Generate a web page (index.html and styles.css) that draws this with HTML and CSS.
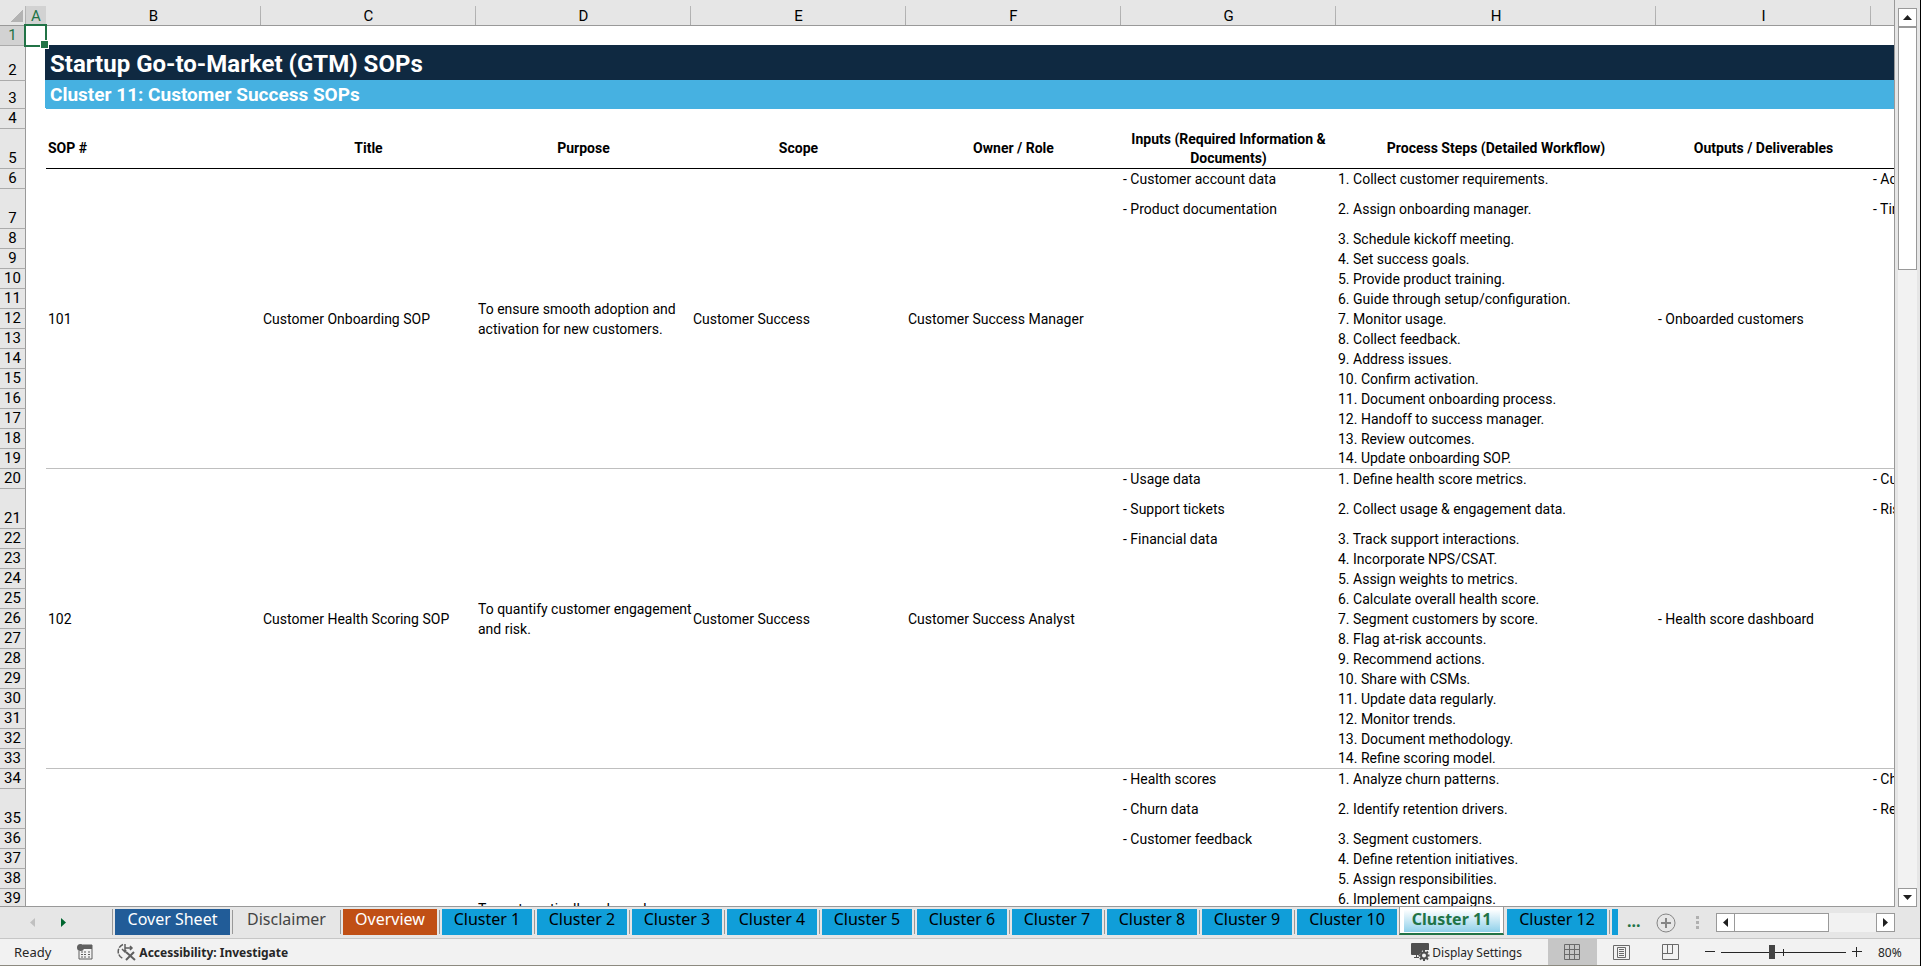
FILE: index.html
```html
<!DOCTYPE html>
<html lang="en">
<head>
    <meta charset="UTF-8">
    <meta name="viewport" content="width=device-width, initial-scale=1.0">
    <title>Startup Go-to-Market (GTM) SOPs</title>
    <link rel="stylesheet" href="styles.css">
</head>
<body>
    <div class="app">
        <div class="workspace">
            <main class="sheet">
                <table class="grid">
                    <colgroup>
                        <col class="col-num">
                        <col class="col-a">
                        <col class="col" span="6">
                        <col class="col-wide">
                        <col class="col" span="2">
                    </colgroup>
                    <thead>
                        <tr>
                            <th class="corner"><button type="button" class="select-all" aria-label="Select all"></button></th>
                            <th class="selected">A</th>
                            <th>B</th>
                            <th>C</th>
                            <th>D</th>
                            <th>E</th>
                            <th>F</th>
                            <th>G</th>
                            <th>H</th>
                            <th>I</th>
                            <th></th>
                        </tr>
                    </thead>
                    <!-- Title block -->
                    <tbody>
                        <tr>
                            <th class="selected">1</th>
                            <td class="active-cell"><span class="cell-cursor"></span></td>
                            <td colspan="9"></td>
                        </tr>
                        <tr class="row-title">
                            <th>2</th>
                            <td></td>
                            <td colspan="9" class="band band-navy"><h1>Startup Go-to-Market (GTM) SOPs</h1></td>
                        </tr>
                        <tr class="row-subtitle">
                            <th>3</th>
                            <td></td>
                            <td colspan="9" class="band band-blue"><h2>Cluster 11: Customer Success SOPs</h2></td>
                        </tr>
                        <tr><th>4</th><td></td><td colspan="9"></td></tr>
                        <tr class="tall headings">
                            <th>5</th>
                            <td></td>
                            <td class="first">SOP #</td>
                            <td>Title</td>
                            <td>Purpose</td>
                            <td>Scope</td>
                            <td>Owner / Role</td>
                            <td>Inputs (Required Information &amp; Documents)</td>
                            <td>Process Steps (Detailed Workflow)</td>
                            <td>Outputs / Deliverables</td>
                            <td></td>
                        </tr>
                    </tbody>
                    <!-- SOP 101 -->
                    <tbody class="sop">
                        <tr>
                            <th>6</th>
                            <td></td>
                            <td rowspan="14" class="merged">101</td>
                            <td rowspan="14" class="merged">Customer Onboarding SOP</td>
                            <td rowspan="14" class="merged">To ensure smooth adoption and<br>activation for new customers.</td>
                            <td rowspan="14" class="merged">Customer Success</td>
                            <td rowspan="14" class="merged">Customer Success Manager</td>
                            <td>- Customer account data</td>
                            <td>1. Collect customer requirements.</td>
                            <td rowspan="14" class="merged">- Onboarded customers</td>
                            <td>- Activation rate</td>
                        </tr>
                        <tr class="tall"><th>7</th><td></td><td>- Product documentation</td><td>2. Assign onboarding manager.</td><td>- Time to value</td></tr>
                        <tr><th>8</th><td></td><td></td><td>3. Schedule kickoff meeting.</td><td></td></tr>
                        <tr><th>9</th><td></td><td></td><td>4. Set success goals.</td><td></td></tr>
                        <tr><th>10</th><td></td><td></td><td>5. Provide product training.</td><td></td></tr>
                        <tr><th>11</th><td></td><td></td><td>6. Guide through setup/configuration.</td><td></td></tr>
                        <tr><th>12</th><td></td><td></td><td>7. Monitor usage.</td><td></td></tr>
                        <tr><th>13</th><td></td><td></td><td>8. Collect feedback.</td><td></td></tr>
                        <tr><th>14</th><td></td><td></td><td>9. Address issues.</td><td></td></tr>
                        <tr><th>15</th><td></td><td></td><td>10. Confirm activation.</td><td></td></tr>
                        <tr><th>16</th><td></td><td></td><td>11. Document onboarding process.</td><td></td></tr>
                        <tr><th>17</th><td></td><td></td><td>12. Handoff to success manager.</td><td></td></tr>
                        <tr><th>18</th><td></td><td></td><td>13. Review outcomes.</td><td></td></tr>
                        <tr class="last"><th>19</th><td></td><td></td><td>14. Update onboarding SOP.</td><td></td></tr>
                    </tbody>
                    <!-- SOP 102 -->
                    <tbody class="sop">
                        <tr>
                            <th>20</th>
                            <td></td>
                            <td rowspan="14" class="merged">102</td>
                            <td rowspan="14" class="merged">Customer Health Scoring SOP</td>
                            <td rowspan="14" class="merged">To quantify customer engagement<br>and risk.</td>
                            <td rowspan="14" class="merged">Customer Success</td>
                            <td rowspan="14" class="merged">Customer Success Analyst</td>
                            <td>- Usage data</td>
                            <td>1. Define health score metrics.</td>
                            <td rowspan="14" class="merged">- Health score dashboard</td>
                            <td>- Customer health</td>
                        </tr>
                        <tr class="tall"><th>21</th><td></td><td>- Support tickets</td><td>2. Collect usage &amp; engagement data.</td><td>- Risk alerts</td></tr>
                        <tr><th>22</th><td></td><td>- Financial data</td><td>3. Track support interactions.</td><td></td></tr>
                        <tr><th>23</th><td></td><td></td><td>4. Incorporate NPS/CSAT.</td><td></td></tr>
                        <tr><th>24</th><td></td><td></td><td>5. Assign weights to metrics.</td><td></td></tr>
                        <tr><th>25</th><td></td><td></td><td>6. Calculate overall health score.</td><td></td></tr>
                        <tr><th>26</th><td></td><td></td><td>7. Segment customers by score.</td><td></td></tr>
                        <tr><th>27</th><td></td><td></td><td>8. Flag at-risk accounts.</td><td></td></tr>
                        <tr><th>28</th><td></td><td></td><td>9. Recommend actions.</td><td></td></tr>
                        <tr><th>29</th><td></td><td></td><td>10. Share with CSMs.</td><td></td></tr>
                        <tr><th>30</th><td></td><td></td><td>11. Update data regularly.</td><td></td></tr>
                        <tr><th>31</th><td></td><td></td><td>12. Monitor trends.</td><td></td></tr>
                        <tr><th>32</th><td></td><td></td><td>13. Document methodology.</td><td></td></tr>
                        <tr class="last"><th>33</th><td></td><td></td><td>14. Refine scoring model.</td><td></td></tr>
                    </tbody>
                    <!-- SOP 103, continues below the fold -->
                    <tbody class="sop">
                        <tr>
                            <th>34</th>
                            <td></td>
                            <td rowspan="7" class="merged"></td>
                            <td rowspan="7" class="merged"></td>
                            <td rowspan="7" class="merged">To systematically reduce churn<br>and improve retention.</td>
                            <td rowspan="7" class="merged"></td>
                            <td rowspan="7" class="merged"></td>
                            <td>- Health scores</td>
                            <td>1. Analyze churn patterns.</td>
                            <td rowspan="7" class="merged"></td>
                            <td>- Churn rate</td>
                        </tr>
                        <tr class="tall"><th>35</th><td></td><td>- Churn data</td><td>2. Identify retention drivers.</td><td>- Retention rate</td></tr>
                        <tr><th>36</th><td></td><td>- Customer feedback</td><td>3. Segment customers.</td><td></td></tr>
                        <tr><th>37</th><td></td><td></td><td>4. Define retention initiatives.</td><td></td></tr>
                        <tr><th>38</th><td></td><td></td><td>5. Assign responsibilities.</td><td></td></tr>
                        <tr><th>39</th><td></td><td></td><td>6. Implement campaigns.</td><td></td></tr>
                        <tr class="rest"><th></th><td></td><td></td><td></td><td></td></tr>
                    </tbody>
                </table>
            </main>
            <div class="vscroll">
                <button type="button" class="scroll-btn" aria-label="Scroll up"><svg width="9" height="5" viewBox="0 0 9 5"><path d="M0 5L4.500 0L9 5z"/></svg></button>
                <div class="vthumb"></div>
                <div class="vtrack"></div>
                <button type="button" class="scroll-btn" aria-label="Scroll down"><svg width="9" height="5" viewBox="0 0 9 5"><path d="M0 0L4.500 5L9 0z"/></svg></button>
            </div>
        </div>

        <!-- Sheet tabs -->
        <nav class="tabbar">
            <div class="tab-nav">
                <button type="button" class="nav-btn" aria-label="Previous sheets" disabled><svg width="5" height="9" viewBox="0 0 5 9"><path d="M5 0L0 4.500L5 9z"/></svg></button>
                <button type="button" class="nav-btn" aria-label="Next sheets"><svg width="5" height="9" viewBox="0 0 5 9"><path d="M0 0L5 4.500L0 9z"/></svg></button>
            </div>
            <div class="tabs">
                <button type="button" class="tab tab-cover">Cover Sheet</button>
                <button type="button" class="tab tab-plain">Disclaimer</button>
                <button type="button" class="tab tab-overview">Overview</button>
                <button type="button" class="tab">Cluster 1</button>
                <button type="button" class="tab">Cluster 2</button>
                <button type="button" class="tab">Cluster 3</button>
                <button type="button" class="tab">Cluster 4</button>
                <button type="button" class="tab">Cluster 5</button>
                <button type="button" class="tab">Cluster 6</button>
                <button type="button" class="tab">Cluster 7</button>
                <button type="button" class="tab">Cluster 8</button>
                <button type="button" class="tab">Cluster 9</button>
                <button type="button" class="tab tab-long before-active">Cluster 10</button>
                <button type="button" class="tab tab-active" aria-current="page">Cluster 11</button>
                <button type="button" class="tab tab-long">Cluster 12</button>
                <button type="button" class="tab tab-cut" aria-label="Next cluster"></button>
            </div>
            <button type="button" class="more" aria-label="More sheets">...</button>
            <button type="button" class="add" aria-label="New sheet">
                <svg width="20" height="20" viewBox="0 0 20 20" fill="none" stroke="#858585"><circle cx="10" cy="10" r="9"/><path d="M10 5v10M5 10h10" stroke-width="2"/></svg>
            </button>
            <span class="grip"><i></i><i></i><i></i></span>
            <div class="hscroll">
                <button type="button" class="scroll-btn" aria-label="Scroll left"><svg width="5" height="9" viewBox="0 0 5 9"><path d="M5 0L0 4.500L5 9z"/></svg></button>
                <div class="hthumb"></div>
                <div class="htrack"></div>
                <button type="button" class="scroll-btn" aria-label="Scroll right"><svg width="5" height="9" viewBox="0 0 5 9"><path d="M0 0L5 4.500L0 9z"/></svg></button>
            </div>
        </nav>

        <!-- Status bar -->
        <footer class="status">
            <span class="ready">Ready</span>
            <button type="button" class="status-btn macro" aria-label="Record macro">
                <svg width="16" height="16" viewBox="0 0 16 16"><path d="M6 1h9v14H2V7" fill="none" stroke="#5f5f5f"/><path d="M6 1h9v4H6z" fill="#5f5f5f"/><circle cx="3.500" cy="3.500" r="3.500" fill="#5f5f5f"/><path d="M4 8h2M7 8h2M11 8h2M4 10.500h2M7 10.500h2M11 10.500h2M4 13h2M7 13h2M11 13h2" stroke="#5f5f5f"/></svg>
            </button>
            <button type="button" class="status-btn access">
                <svg width="19" height="18" viewBox="0 0 19 18" fill="none" stroke="#5f5f5f"><path d="M6 1.500A7.500 7.500 0 0 0 6 15.500" stroke-width="1.500" stroke-dasharray="5 1"/><path d="M8 1v7M5 6l3 3 1-2M8 5h7M13 3l2 2-2 2" stroke-width="1.500"/><path d="M9 9l9 8M17 9l-8 8" stroke-width="2"/></svg>
                <span>Accessibility: Investigate</span>
            </button>
            <button type="button" class="status-btn display">
                <svg width="20" height="18" viewBox="0 0 20 18"><path d="M1 0h16a1 1 0 0 1 1 1v6h-6l-4 5H6v2h2v1H3v-1h2v-2H1a1 1 0 0 1-1-1V1a1 1 0 0 1 1-1z" fill="#4f4f4f"/><circle cx="13" cy="12.500" r="3" fill="none" stroke="#4f4f4f" stroke-width="2"/><path d="M13 7v2M13 16v2M7.500 12.500h2M16.500 12.500h2M9 8.500l1.500 1.500M15.500 15l1.500 1.500M17 8.500L15.500 10M10.500 15L9 16.500" stroke="#4f4f4f" stroke-width="2"/></svg>
                <span>Display Settings</span>
            </button>
            <div class="views">
                <button type="button" class="view view-on" aria-label="Normal view">
                    <svg width="17" height="17" viewBox="0 0 17 17" fill="none" stroke="#6a6a6a"><path d="M.5 .5h15v15H.5zM5.500 .5v15M10.500 .5v15M.5 5.500h15M.5 10.500h15"/></svg>
                </button>
                <button type="button" class="view" aria-label="Page layout">
                    <svg width="17" height="17" viewBox="0 0 17 17" fill="none" stroke="#6a6a6a"><path d="M.5 1.500h16v14H.5zM4.500 3.500h8v10h-8zM6 5.500h5M6 7.500h5M6 9.500h5M6 11.500h5"/></svg>
                </button>
                <button type="button" class="view" aria-label="Page break preview">
                    <svg width="17" height="17" viewBox="0 0 17 17" fill="none" stroke="#6a6a6a"><path d="M.5 .5h16v15H.5zM5.500 .5v9M10.500 .5v9M.5 9.500h10v-9"/></svg>
                </button>
            </div>
            <div class="zoom">
                <button type="button" class="zoom-btn" aria-label="Zoom out"><svg width="10" height="10" viewBox="0 0 10 10"><path d="M0 4.500h10" stroke="#262626"/></svg></button>
                <input type="range" class="zoom-range" min="0" max="100" value="40" aria-label="Zoom">
                <button type="button" class="zoom-btn" aria-label="Zoom in"><svg width="10" height="10" viewBox="0 0 10 10"><path d="M0 4.500h10M4.500 0v10" stroke="#262626"/></svg></button>
                <span class="zoom-value">80%</span>
            </div>
        </footer>
    </div>
</body>
</html>
```

FILE: styles.css
```css
/* Global Styles */
* {
    box-sizing: border-box;
}

body {
    margin: 0;
    background: #e6e6e6;
    color: #000;
    font-family: Roboto, "Liberation Sans", sans-serif;
    font-size: 14px;
}

button {
    margin: 0;
    padding: 0;
    border: none;
    background: none;
    color: inherit;
    font: inherit;
    cursor: pointer;
}

svg {
    display: block;
}

.app {
    display: flex;
    flex-direction: column;
    height: 100vh;
    overflow: hidden;
    border-right: 1px solid #000;
}

/* Workspace */
.workspace {
    flex: 1;
    min-height: 0;
    display: flex;
}

.sheet {
    flex: 1;
    min-width: 0;
    overflow: hidden;
    background: #fff;
    border-right: 1px solid #999;
    border-bottom: 1px solid #999;
}

/* Grid */
.grid {
    table-layout: fixed;
    width: 2086px;
    border-collapse: separate;
    border-spacing: 0;
    line-height: 19px;
}

.col-num {
    width: 26px;
}

.col-a {
    width: 20px;
}

.col {
    width: 215px;
}

.col-wide {
    width: 320px;
}

.grid tr {
    height: 20px;
}

.grid td {
    padding: 0 2px;
    height: 20px;
    white-space: nowrap;
    vertical-align: middle;
}

.grid th {
    padding: 0;
    background: #e6e6e6;
    border-right: 1px solid #999;
    border-bottom: 1px solid #ababab;
    font-size: 15px;
    font-weight: 400;
    line-height: 19px;
    vertical-align: bottom;
}

.grid thead th {
    height: 26px;
    border-right: none;
    border-bottom-color: #999;
    background: linear-gradient(#b8b8b8, #ababab) right bottom / 1px 19px no-repeat #e6e6e6;
    line-height: 17px;
}

.grid thead th.selected {
    background: linear-gradient(#d2d2d2, #d2d2d2) right bottom / 100% 19px no-repeat #e6e6e6;
    border-bottom-color: #217346;
}

.grid th.selected {
    background: #d2d2d2;
    color: #217346;
}

.grid .row-title,
.grid .row-title td {
    height: 35px;
}

.grid .row-subtitle,
.grid .row-subtitle td {
    height: 28px;
}

.grid .tall,
.grid .tall td {
    height: 40px;
}

.grid .rest td {
    height: 160px;
}

.select-all {
    display: block;
    margin: 0 3px 3px auto;
    width: 12px;
    height: 12px;
    background: linear-gradient(135deg, transparent 50%, #b3b3b3 50%);
}

/* Selected cell */
.active-cell {
    position: relative;
}

.cell-cursor {
    position: absolute;
    top: -2px;
    left: -2px;
    width: 23px;
    height: 23px;
    border: 2px solid #217346;
}

.cell-cursor::after {
    content: "";
    position: absolute;
    right: -4px;
    bottom: -4px;
    width: 7px;
    height: 7px;
    background: #217346;
    border: 1px solid #fff;
}

/* Title bands */
.grid .band {
    padding-left: 4px;
    color: #fff;
}

.band-navy {
    background: #0f2941;
    box-shadow: -1px -1px 0 #0f2941;
}

.band-blue {
    background: #46b1e1;
    box-shadow: -1px -1px 0 #46b1e1;
}

.band h1 {
    margin: 0;
    font-size: 24px;
    font-weight: 700;
    line-height: 32px;
}

.band h2 {
    margin: 0;
    font-size: 19px;
    font-weight: 700;
    line-height: 26px;
}

/* Column headings */
.grid .headings td {
    border-bottom: 1px solid #000;
    font-weight: 700;
    text-align: center;
    white-space: normal;
}

.grid .headings td:nth-child(2) {
    border-bottom: none;
}

.grid .headings .first {
    text-align: left;
}

.grid .merged {
    line-height: 20px;
}

.sop .merged,
.sop .last td {
    border-bottom: 1px solid #bfbfbf;
}

.sop .last td:nth-child(2) {
    border-bottom: none;
}

/* Scroll bars */
.scroll-btn {
    display: flex;
    flex: none;
    align-items: center;
    justify-content: center;
    width: 19px;
    height: 19px;
    background: #fff;
    border: 1px solid #999;
    fill: #1f1f1f;
}

.vscroll {
    display: flex;
    flex-direction: column;
    width: 25px;
    padding: 8px 3px 0;
}

.vthumb {
    flex: none;
    height: 243px;
    background: #fff;
    border: 1px solid #999;
}

.vtrack {
    flex: 1;
    background: #f2f2f2;
}

.hscroll {
    display: flex;
    width: 179px;
    margin-right: 25px;
}

.hthumb {
    width: 94px;
    background: #fff;
    border: 1px solid #999;
    border-left: none;
}

.htrack {
    flex: 1;
    background: #f2f2f2;
}

/* Sheet tabs */
.tabbar {
    display: flex;
    align-items: center;
    height: 32px;
    border-bottom: 1px solid #c6c6c6;
    font-family: "Noto Sans", "Open Sans", sans-serif;
    font-size: 16px;
}

.tab-nav {
    display: flex;
    gap: 26px;
    width: 112px;
    padding-left: 30px;
}

.nav-btn {
    fill: #00662f;
}

.nav-btn:disabled {
    fill: #c0c0c0;
}

.tabs {
    display: flex;
    align-self: flex-start;
    border-left: 1px solid #999;
    margin-top: 2px;
    padding-left: 2px;
    height: 26px;
}

.tab {
    position: relative;
    width: 90px;
    margin-right: 5px;
    background: #109ed9;
    line-height: 20px;
    padding-bottom: 6px;
    white-space: nowrap;
}

/* divider between two tabs */
.tab::after {
    content: "";
    position: absolute;
    top: 1px;
    right: -3px;
    width: 1px;
    height: 24px;
    background: #999;
}

.tab-cover {
    width: 115px;
    background: #215c98;
    color: #fff;
}

.tab-plain {
    width: 103px;
    background: none;
    color: #444;
}

.tab-overview {
    width: 94px;
    background: #c04f15;
    color: #fff;
}

.tab-long {
    width: 100px;
}

.before-active {
    margin-right: 2px;
}

.tab-active {
    width: 105px;
    height: 28px;
    margin-top: -2px;
    margin-right: 3px;
    padding: 0 0 2px;
    background: linear-gradient(#fff 10%, #8fd0ea) center top / 96px 25px no-repeat #fff;
    border: 1px solid #999;
    border-top: none;
    border-bottom: 2px solid #217346;
    color: #217346;
    font-weight: 700;
}

.before-active::after,
.tab-active::after,
.tab-cut::after {
    display: none;
}

.tab-cut {
    width: 6px;
    margin-right: 0;
}

.more {
    margin-left: 9px;
    padding-bottom: 4px;
    color: #217346;
    font-weight: 700;
}

.add {
    margin-left: auto;
}

.grip {
    display: grid;
    gap: 2px;
    margin: 0 17px 0 20px;
}

.grip i {
    width: 3px;
    height: 3px;
    background: #b0b0b0;
}

/* Status bar */
.status {
    display: flex;
    align-items: center;
    height: 27px;
    padding-left: 14px;
    background: #f2f2f2;
    border-bottom: 1px solid #8c8a80;
    color: #262626;
    font-family: "Noto Sans", "Open Sans", sans-serif;
    font-size: 12px;
}

.ready {
    font-size: 13px;
}

.status-btn {
    display: flex;
    align-items: center;
    gap: 3px;
    white-space: nowrap;
}

.macro {
    margin-left: 26px;
}

.access {
    margin-left: 24px;
    font-weight: 700;
}

.display {
    gap: 1px;
    margin-left: auto;
    margin-right: 26px;
}

.views {
    display: flex;
    align-self: stretch;
}

.view {
    display: flex;
    align-items: center;
    justify-content: center;
    width: 49px;
}

.view-on {
    background: #c6c6c6;
}

.zoom {
    display: flex;
    align-items: center;
    margin-left: 10px;
}

.zoom-btn {
    width: 10px;
}

.zoom-range {
    appearance: none;
    width: 125px;
    height: 13px;
    margin: 0 6px;
    background:
        linear-gradient(#262626, #262626) center / 1px 7px no-repeat,
        linear-gradient(#262626, #262626) center / 100% 1px no-repeat;
}

.zoom-range::-webkit-slider-thumb {
    appearance: none;
    width: 6px;
    height: 14px;
    background: #444;
}

.zoom-value {
    width: 58px;
    padding-left: 16px;
}
```
